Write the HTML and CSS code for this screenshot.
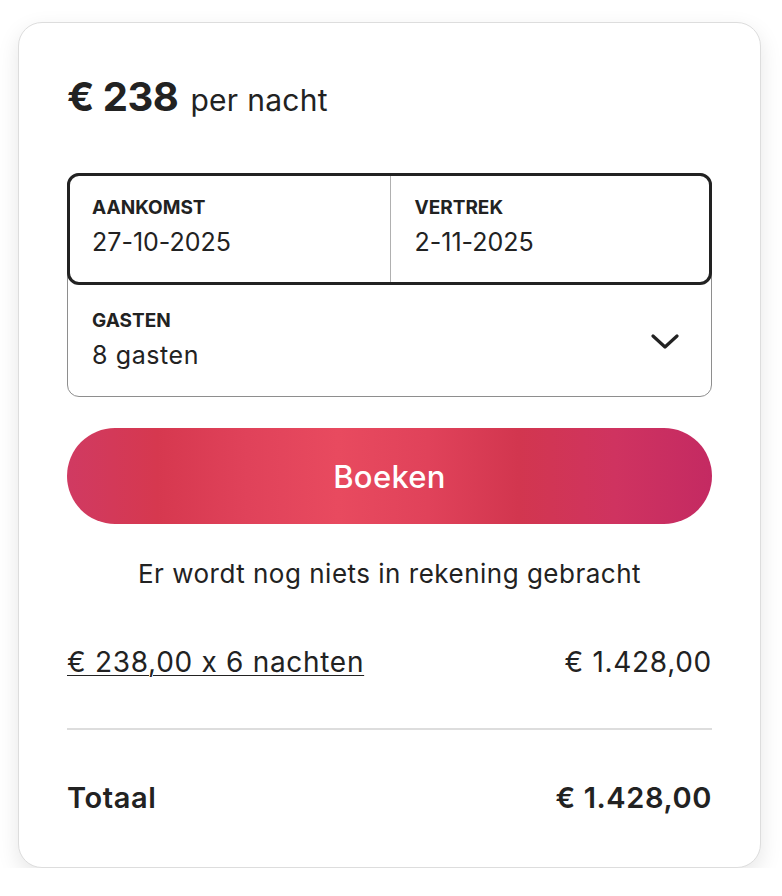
FILE: index.html
```html
<!DOCTYPE html>
<html lang="nl">
<head>
<meta charset="utf-8">
<title>Boeken</title>
<link rel="stylesheet" href="styles.css">
</head>
<body>
<div class="card">
  <div class="price"><span class="amount">€ 238</span><span class="per">per nacht</span></div>

  <div class="picker">
    <div class="dates">
      <div class="cell">
        <div class="label">AANKOMST</div>
        <div class="value">27-10-2025</div>
      </div>
      <div class="cell cell-right">
        <div class="label">VERTREK</div>
        <div class="value">2-11-2025</div>
      </div>
    </div>
    <div class="guests">
      <div class="guests-text">
        <div class="label">GASTEN</div>
        <div class="value value-text">8 gasten</div>
      </div>
      <svg class="chevron" width="28" height="16" viewBox="0 0 28 16" aria-hidden="true">
        <path d="M2 2 L14 13 L26 2" fill="none" stroke="#222" stroke-width="3.2" stroke-linecap="round" stroke-linejoin="round"/>
      </svg>
    </div>
  </div>

  <button class="book">Boeken</button>

  <p class="note">Er wordt nog niets in rekening gebracht</p>

  <div class="row">
    <span class="link">€ 238,00 x 6 nachten</span>
    <span>€ 1.428,00</span>
  </div>

  <div class="divider"></div>

  <div class="row total">
    <span>Totaal</span>
    <span>€ 1.428,00</span>
  </div>
</div>
</body>
</html>
```
FILE: styles.css
```css
* { box-sizing: border-box; }

body {
  margin: 0;
  background: #ffffff;
  font-family: "Inter", "Noto Sans", sans-serif;
  font-feature-settings: "calt" 0;
  color: #222222;
}

.card {
  width: 743px;
  margin: 22px 0 0 18px;
  padding: 48px 48px 51px;
  background: #ffffff;
  border: 1px solid #dddddd;
  border-radius: 24px;
  box-shadow: 0 8px 22px rgba(0, 0, 0, 0.10);
}

.price {
  font-size: 40px;
  line-height: 52px;
  white-space: nowrap;
}

.amount {
  font-size: 40px;
  font-weight: 700;
  letter-spacing: -0.5px;
}

.per {
  margin-left: 12px;
  font-size: 30px;
  line-height: 36px;
  font-weight: 400;
  letter-spacing: 0.3px;
}

.picker {
  margin-top: 50px;
  border: 1px solid #8e8e8e;
  border-radius: 12px;
}

.dates {
  display: grid;
  grid-template-columns: 1fr 1fr;
  margin: -1px -1px 0;
  height: 112px;
  border: 3px solid #222222;
  border-radius: 12px;
}

.cell {
  padding: 22px 22px 0;
}

.cell-right {
  padding-left: 24px;
  border-left: 1px solid #b0b0b0;
}

.label {
  font-size: 19px;
  line-height: 20px;
  font-weight: 700;
}

.value {
  margin-top: 8px;
  font-size: 25px;
  line-height: 32px;
}

.value-text {
  letter-spacing: 0.6px;
}

.guests {
  display: flex;
  align-items: center;
  justify-content: space-between;
  height: 111px;
  padding: 0 32px 0 24px;
}

.chevron {
  display: block;
  margin-top: 2px;
}

.book {
  display: block;
  width: 100%;
  height: 96px;
  margin-top: 31px;
  border: none;
  border-radius: 48px;
  background: linear-gradient(90deg, #d03a62 0%, #d6384f 14%, #e0425a 28%, #e84a5f 42%, #e0425a 56%, #d2364f 70%, #cf3360 85%, #c42a62 100%);
  color: #ffffff;
  font-family: inherit;
  font-feature-settings: "calt" 0;
  font-size: 31px;
  font-weight: 500;
  letter-spacing: 0.3px;
}

.note {
  margin: 34px 0 0;
  text-align: center;
  font-size: 26px;
  line-height: 32px;
  letter-spacing: 0.5px;
}

.row {
  display: flex;
  justify-content: space-between;
  align-items: baseline;
  margin-top: 55px;
  font-size: 28px;
  line-height: 34px;
  letter-spacing: 0.7px;
}

.link {
  text-decoration: underline;
  text-underline-offset: 3px;
  text-decoration-thickness: 1px;
}

.divider {
  height: 2px;
  margin-top: 49px;
  background: #dddddd;
}

.total {
  margin-top: 50px;
  font-size: 29px;
  line-height: 36px;
  font-weight: 600;
  letter-spacing: 0.6px;
}
```
